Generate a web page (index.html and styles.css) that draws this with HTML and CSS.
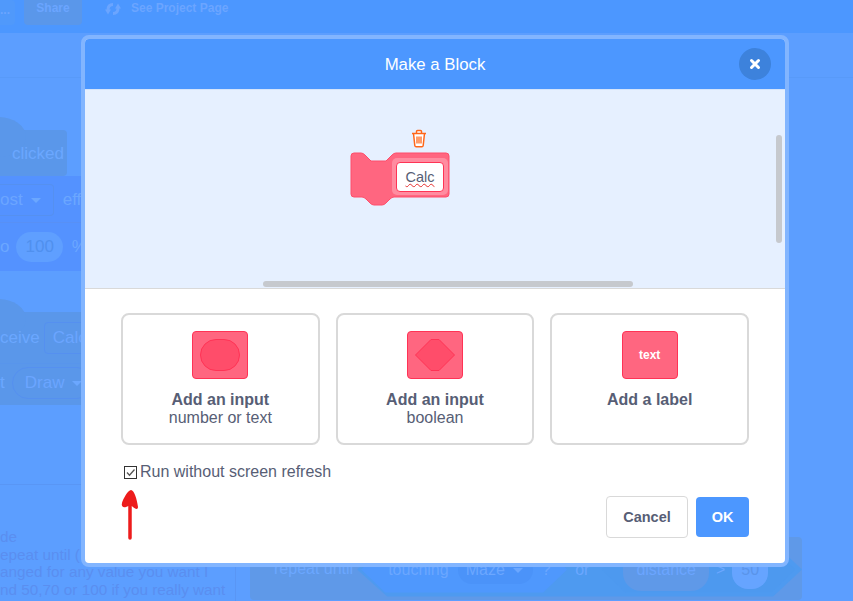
FILE: index.html
```html
<!DOCTYPE html>
<html lang="en">
<head>
    <meta charset="UTF-8">
    <title>Make a Block</title>
    <link rel="stylesheet" href="styles.css">
</head>
<body>
    <div class="editor">
        <div class="menu-bar">
            <span class="menu-dots">...</span>
            <span class="share">Share</span>
            <svg class="see-icon" width="16" height="14" viewBox="0 0 16 14" fill="#6ba5ff">
                <path d="M8 2.500C4.500 2.500 3 5 3 8" fill="none" stroke="#6ba5ff" stroke-width="3"/>
                <path d="M0 7.500H6L3 12.500Z"/>
                <path d="M8 11.500C11.500 11.500 13 9 13 6" fill="none" stroke="#6ba5ff" stroke-width="3"/>
                <path d="M10 6.500H16L13 1.500Z"/>
            </svg>
            <span class="see-page">See Project Page</span>
        </div>
        <div class="tab-strip"></div>
        <div class="script-area">
            <div class="block hat-one"><span class="tint">clicked</span></div>
            <div class="block effect-row"><span class="drop">ost<i class="caret"></i></span><span class="tint">effe</span></div>
            <div class="block to-row"><span class="tint">o</span><span class="pill">100</span><span class="tint percent">%</span></div>
            <div class="block hat-two"><span class="tint">ceive</span><span class="drop">Calc</span></div>
            <div class="block draw-row"><span class="tint">t</span><span class="drop round">Draw<i class="caret"></i></span></div>
            <div class="block repeat-row">
                <span class="tint">repeat until</span>
                <div class="cond-outer">
                    <div class="cond first">
                        <span class="tint">touching</span>
                        <span class="drop round dark">Maze<i class="caret"></i></span>
                        <span class="tint">?</span>
                    </div>
                    <span class="tint">or</span>
                    <div class="cond second">
                        <span class="pill wide">distance</span>
                        <span class="tint">&gt;</span>
                        <span class="pill num">50</span>
                    </div>
                </div>
            </div>
            <div class="note">
                <p>de</p>
                <p>epeat until (</p>
                <p>anged for any value you want I</p>
                <p>nd 50,70 or 100 if you really want</p>
            </div>
        </div>
    </div>

    <div class="overlay">
        <div class="modal">
            <div class="modal-head">
                <span>Make a Block</span>
                <button class="close-btn">
                    <svg width="12" height="12" viewBox="0 0 12 12"><path d="M2.500 2.500L9.500 9.500M9.500 2.500L2.500 9.500" stroke="#fff" stroke-width="3" stroke-linecap="round"/></svg>
                </button>
            </div>
            <div class="preview">
                <div class="preview-block">
                    <svg class="trash" width="18" height="19" viewBox="0 0 18 19" fill="none" stroke="#ff6619" stroke-width="1.500">
                        <path d="M2 4.500H16M6.500 4.500V2.500Q6.500 1.500 7.500 1.500H10.500Q11.500 1.500 11.500 2.500V4.500M3.500 4.500L4.800 16.500Q5 17.800 6.200 17.800H11.800Q13 17.800 13.200 16.500L14.500 4.500" fill="#fff"/>
                        <path d="M7 7.500V14.500M9 7.500V14.500M11 7.500V14.500" stroke-width="1.300"/>
                    </svg>
                    <div class="proc">
                        <svg class="proc-shape" width="100" height="54" viewBox="0 0 100 54">
                            <path d="M4 1H11Q13 1 15 3L21 9H36L42 3Q44 1 46 1H96Q99 1 99 4V42Q99 45 96 45H44Q42 45 40 47L36 51Q34 53 32 53H24Q22 53 20 51L16 47Q14 45 12 45H4Q1 45 1 42V4Q1 1 4 1Z" fill="#ff6680" stroke="#ff4d6a"/>
                        </svg>
                        <div class="name-wrap"><div class="name-box"><span class="squiggle">Calc</span></div></div>
                    </div>
                </div>
                <div class="scroll-y"></div>
                <div class="scroll-x"></div>
            </div>
            <div class="modal-body">
                <div class="options">
                    <div class="option">
                        <div class="opt-icon"><span class="shape-round"></span></div>
                        <div class="opt-title">Add an input</div>
                        <div class="opt-sub">number or text</div>
                    </div>
                    <div class="option">
                        <div class="opt-icon">
                            <svg width="40" height="32" viewBox="0 0 40 32"><path d="M.5 16L16 .5H24L39.500 16 24 31.500H16Z" fill="#ff4d6a" stroke="#ff3355"/></svg>
                        </div>
                        <div class="opt-title">Add an input</div>
                        <div class="opt-sub">boolean</div>
                    </div>
                    <div class="option">
                        <div class="opt-icon"><span class="text-tag">text</span></div>
                        <div class="opt-title">Add a label</div>
                    </div>
                </div>
                <label class="refresh">
                    <svg width="13" height="13" viewBox="0 0 13 13"><rect x=".5" y=".5" width="12" height="12" fill="#fff" stroke="#333"/><path d="M3 6.500L5.500 9.200L10.500 3.500" fill="none" stroke="#555" stroke-width="1.300"/></svg>
                    Run without screen refresh
                </label>
                <div class="footer">
                    <svg class="arrow" width="20" height="51" viewBox="0 0 20 51"><path d="M10 49V14" stroke="#ed1c1c" stroke-width="3.500" stroke-linecap="round"/><path d="M11 1C14 1 17 10 18 18C18 21 15 20 13 18C11 16 9 17 6 18C3 19 1 17 2 14C3 10 8 1 11 1Z" fill="#ed1c1c"/></svg>
                    <div class="buttons">
                        <button class="btn cancel">Cancel</button>
                        <button class="btn ok">OK</button>
                    </div>
                </div>
            </div>
        </div>
    </div>
</body>
</html>
```

FILE: styles.css
```css
html, body {
    margin: 0;
    padding: 0;
    height: 100%;
    overflow: hidden;
}

body {
    font-family: "Liberation Sans", Arial, sans-serif;
    background-color: #5c9eff;
    color: #575e75;
}

.editor {
    height: 601px;
    display: flex;
    flex-direction: column;
}

.menu-bar {
    height: 33px;
    background-color: #4c97ff;
    display: flex;
    align-items: flex-start;
    font-size: 12px;
    font-weight: bold;
    color: #6ba5ff;
}

.menu-dots {
    width: 15px;
    height: 25px;
    background-color: #5099fb;
    border-radius: 0 4px 4px 0;
    margin-right: 9px;
    line-height: 20px;
}

.share {
    width: 58px;
    height: 25px;
    line-height: 17px;
    text-align: center;
    background-color: #5a97ea;
    border-radius: 0 0 4px 4px;
}

.see-icon {
    margin: 2px 10px 0 23px;
}

.see-page {
    line-height: 17px;
}

.tab-strip {
    height: 44px;
    border-bottom: 1px solid #589af9;
}

.script-area {
    position: relative;
    flex: 1;
    overflow: hidden;
}

/* blocks sit on the free script canvas behind the dialog */
.block {
    position: absolute;
    display: flex;
    align-items: center;
    font-size: 17px;
    box-sizing: border-box;
}

.tint {
    color: #6ba7ff;
}

.hat-one {
    left: 0;
    top: 52px;
    width: 67px;
    height: 46px;
    padding: 2px 0 0 12px;
    background-color: #5a97ea;
    border-radius: 0 4px 4px 0;
}

.hat-one::before,
.hat-two::before {
    content: "";
    position: absolute;
    left: -30px;
    top: -13px;
    width: 56px;
    height: 40px;
    background-color: #5a97ea;
    border-radius: 50%;
}

.hat-one .tint,
.hat-two span {
    position: relative;
}

.effect-row {
    left: 0;
    top: 98px;
    width: 85px;
    height: 47px;
    padding-top: 2px;
    gap: 9px;
    background-color: #5492ff;
    border-bottom: 1px solid #5890f5;
}

.to-row {
    left: 0;
    top: 145px;
    width: 85px;
    height: 48px;
    gap: 7px;
    background-color: #5492ff;
}

.percent {
    margin-left: 2px;
}

.hat-two {
    left: 0;
    top: 234px;
    width: 85px;
    height: 52px;
    gap: 4px;
    background-color: #5a97ea;
    border-bottom: 1px solid #5895ec;
}

.draw-row {
    left: 0;
    top: 286px;
    width: 85px;
    height: 41px;
    padding-bottom: 4px;
    gap: 7px;
    background-color: #5a97ea;
}

.effect-row .drop {
    padding: 5px 12px 5px 0;
    border-left: none;
    border-radius: 0 4px 4px 0;
}

.drop {
    display: inline-block;
    padding: 5px 8px;
    border: 1px solid #5590f0;
    border-radius: 4px;
    color: #6ba5ff;
    white-space: nowrap;
}

.drop.round {
    border-radius: 16px;
    padding: 5px 10px 5px 12px;
}

.drop.dark {
    padding: 5px 10px 5px 8px;
    background-color: #4b93f9;
    border: none;
    color: #6ba7ff;
}

.caret {
    display: inline-block;
    width: 0;
    height: 0;
    margin-left: 8px;
    vertical-align: middle;
    border-left: 5px solid transparent;
    border-right: 5px solid transparent;
    border-top: 5px solid #6ba7ff;
}

.pill {
    display: inline-block;
    padding: 5px 9px;
    border-radius: 15px;
    background-color: #5f9fff;
    color: #5090ee;
}

.pill.wide {
    background-color: #5f99e8;
    color: #6ba5ff;
    padding: 12px 13px;
    border-radius: 18px;
}

.pill.num {
    background-color: #66a4ff;
    color: #5a94ea;
    padding: 10px 9px;
    border-radius: 16px;
}

.repeat-row {
    left: 250px;
    top: 459px;
    width: 552px;
    height: 63px;
    padding-left: 24px;
    gap: 4px;
    font-size: 16px;
    background-color: #5f99e8;
    border-radius: 4px;
    white-space: nowrap;
}

.cond-outer {
    display: flex;
    align-items: center;
    gap: 8px;
    width: 446px;
    height: 54px;
    margin-top: 2px;
    padding-left: 4px;
    box-sizing: border-box;
    background-color: #4e9af0;
    clip-path: polygon(0 50%, 30px 0, 416px 0, 100% 50%, 416px 100%, 30px 100%);
}

.cond {
    display: flex;
    align-items: center;
    height: 46px;
    box-sizing: border-box;
}

.cond.first {
    gap: 9px;
    width: 206px;
    padding-left: 27px;
    background-color: #4f98fd;
    clip-path: polygon(0 50%, 24px 0, 182px 0, 100% 50%, 182px 100%, 24px 100%);
}

.cond.second {
    gap: 7px;
    width: 194px;
    margin-left: 4px;
    padding-left: 22px;
    clip-path: polygon(0 50%, 24px 0, 170px 0, 100% 50%, 170px 100%, 24px 100%);
    background-color: #4d99ef;
}

.note {
    position: absolute;
    left: 0;
    top: 406px;
    width: 236px;
    height: 117px;
    box-sizing: border-box;
    padding-top: 43px;
    font-size: 15.300px;
    line-height: 17.500px;
    color: #5a8ef0;
    white-space: nowrap;
    border-top: 1px solid #5996f5;
    border-right: 1px solid #5996f5;
}

.note p {
    margin: 0;
}

.overlay {
    position: absolute;
    left: 0;
    top: 0;
    width: 100%;
    height: 100%;
}

.modal {
    position: absolute;
    left: 81px;
    top: 35px;
    width: 700px;
    border: 4px solid #82b5ff;
    border-radius: 8px;
    background-color: #fff;
    overflow: hidden;
}

.modal-head {
    position: relative;
    height: 50px;
    box-sizing: border-box;
    padding-top: 2px;
    background-color: #4c97ff;
    color: #fff;
    font-size: 16.800px;
    display: flex;
    align-items: center;
    justify-content: center;
}

.close-btn {
    position: absolute;
    right: 14px;
    top: 9px;
    width: 32px;
    height: 32px;
    border: none;
    border-radius: 50%;
    background-color: #3d82dc;
    padding: 0;
    display: flex;
    align-items: center;
    justify-content: center;
}

.preview {
    position: relative;
    height: 200px;
    box-sizing: border-box;
    padding: 39px 0 0 265px;
    background-color: #e6f0ff;
    border-top: 1px solid #d5e4fb;
    border-bottom: 1px solid #d9d9d9;
}

.preview-block {
    width: 100px;
    display: flex;
    flex-direction: column;
    gap: 4px;
}

.trash {
    margin-left: 60px;
}

.proc {
    position: relative;
    width: 100px;
    height: 54px;
}

.proc-shape {
    display: block;
}

.name-wrap {
    position: absolute;
    left: 42px;
    top: 6px;
    width: 56px;
    height: 37px;
    background-color: #ff8ca0;
    border-radius: 5px;
    display: flex;
    align-items: center;
    justify-content: center;
}

.name-box {
    width: 48px;
    height: 30px;
    box-sizing: border-box;
    background-color: #fff;
    border: 1px solid #ff3355;
    border-radius: 4px;
    font-size: 14.500px;
    text-align: center;
    line-height: 28px;
}

.squiggle {
    text-decoration: underline wavy #e62e2e 1px;
    text-decoration-skip-ink: none;
    text-underline-offset: 1px;
}

.scroll-y {
    position: absolute;
    right: 3px;
    top: 45px;
    width: 6px;
    height: 108px;
    background-color: #c6c9ce;
    border-radius: 3px;
}

.scroll-x {
    position: absolute;
    left: 178px;
    bottom: 1px;
    width: 370px;
    height: 6px;
    background-color: #c6c9ce;
    border-radius: 3px;
}

.modal-body {
    padding: 24px 36px;
}

.options {
    display: grid;
    grid-template-columns: repeat(3, 1fr);
    gap: 16px;
}

.option {
    height: 132px;
    box-sizing: border-box;
    border: 2px solid #d9d9d9;
    border-radius: 8px;
    display: flex;
    flex-direction: column;
    align-items: center;
    padding-top: 16px;
}

.opt-icon {
    width: 56px;
    height: 48px;
    box-sizing: border-box;
    background-color: #ff6680;
    border: 1px solid #ff3355;
    border-radius: 4px;
    display: flex;
    align-items: center;
    justify-content: center;
    margin-bottom: 11px;
}

.shape-round {
    width: 40px;
    height: 32px;
    box-sizing: border-box;
    background-color: #ff4d6a;
    border: 1px solid #ff3355;
    border-radius: 16px;
}

.text-tag {
    color: #fff;
    font-size: 12px;
    font-weight: bold;
}

.opt-title {
    font-size: 16px;
    font-weight: bold;
    line-height: 19px;
}

.opt-sub {
    font-size: 16px;
    line-height: 18px;
}

.refresh {
    display: flex;
    align-items: center;
    gap: 3px;
    font-size: 16px;
    line-height: 18px;
    margin: 18px 0 0 3px;
}

.footer {
    display: flex;
    justify-content: space-between;
    align-items: flex-start;
    height: 58px;
}

.arrow {
    margin: 8px 0 0 -1px;
}

.buttons {
    display: flex;
    align-items: center;
    gap: 8px;
    margin-top: 15px;
}

.btn {
    font-family: "Liberation Sans", Arial, sans-serif;
    font-size: 14.500px;
    font-weight: bold;
    border-radius: 4px;
    box-sizing: border-box;
}

.cancel {
    width: 82px;
    height: 42px;
    background-color: #fff;
    color: #575e75;
    border: 1px solid #d9d9d9;
}

.ok {
    width: 53px;
    height: 40px;
    background-color: #4c97ff;
    color: #fff;
    border: none;
}
```
